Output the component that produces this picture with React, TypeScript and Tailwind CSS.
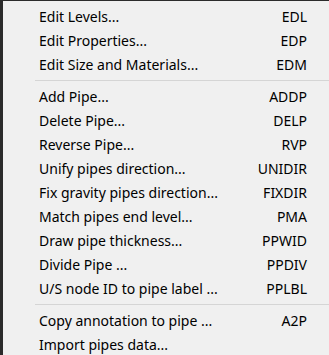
import React from "react";

type Item = { label: string; key?: string } | "sep";

const items: Item[] = [
  { label: "Edit Levels...", key: "EDL" },
  { label: "Edit Properties...", key: "EDP" },
  { label: "Edit Size and Materials...", key: "EDM" },
  "sep",
  { label: "Add Pipe...", key: "ADDP" },
  { label: "Delete Pipe...", key: "DELP" },
  { label: "Reverse Pipe...", key: "RVP" },
  { label: "Unify pipes direction...", key: "UNIDIR" },
  { label: "Fix gravity pipes direction...", key: "FIXDIR" },
  { label: "Match pipes end level...", key: "PMA" },
  { label: "Draw pipe thickness...", key: "PPWID" },
  { label: "Divide Pipe ...", key: "PPDIV" },
  { label: "U/S node ID to pipe label ...", key: "PPLBL" },
  "sep",
  { label: "Copy annotation to pipe ...", key: "A2P" },
  { label: "Import pipes data..." },
];

export default function App() {
  return (
    <div
      className="w-[329px] h-[355px] overflow-hidden bg-[#f0f0f0] border-t border-l-[3px] border-[#2b2b2b] text-black text-[14px]"
      style={{ fontFamily: '"Noto Sans", "Open Sans", sans-serif' }}
    >
      <div className="pt-[3px]">
        {items.map((it, i) =>
          it === "sep" ? (
            <div key={i} className="h-[8px] flex items-center pl-[32px]">
              <div className="h-px w-full bg-[#d5d5d5]" />
            </div>
          ) : (
            <div key={i} className="h-[24px] flex items-center justify-between pl-[36px] pr-[22px] whitespace-nowrap">
              <span>{it.label}</span>
              <span>{it.key}</span>
            </div>
          )
        )}
      </div>
    </div>
  );
}
